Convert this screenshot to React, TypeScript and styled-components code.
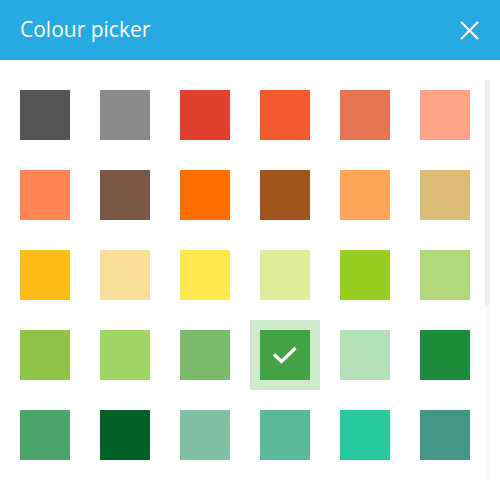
import React, { useState } from "react";
import styled, { createGlobalStyle } from "styled-components";

const Global = createGlobalStyle`
  html, body { margin: 0; padding: 0; background: #ffffff; }
  body { font-family: "Open Sans", "Noto Sans", sans-serif; }
  * { box-sizing: border-box; }
`;

const Dialog = styled.div`
  width: 500px;
  height: 500px;
  display: flex;
  flex-direction: column;
  background: #ffffff;
`;

const Header = styled.header`
  height: 60px;
  flex: none;
  background: #27a9e1;
  display: flex;
  align-items: center;
  justify-content: space-between;
  padding: 0 20px;
`;

const Title = styled.h1`
  margin: 0;
  font-family: "Open Sans", "Noto Sans", sans-serif;
  font-weight: 400;
  font-size: 21px;
  color: #ffffff;
  line-height: 1;
  margin-top: -1px;
`;

const CloseButton = styled.button`
  border: 0;
  background: transparent;
  padding: 0;
  width: 20px;
  height: 20px;
  display: flex;
  align-items: center;
  justify-content: center;
  cursor: pointer;
  margin-right: 1px;
`;

const Body = styled.div`
  display: flex;
  margin-top: 20px;
  padding-right: 10px;
  height: 400px;
`;

const Scroller = styled.div`
  flex: 1;
  height: 400px;
  overflow: hidden;
`;

const ScrollTrack = styled.div`
  width: 5px;
  height: 400px;
  background: #fafafa;
  display: flex;
  flex-direction: column;
`;

const ScrollThumb = styled.div`
  width: 5px;
  height: 225px;
  background: #eeeeee;
`;

const Grid = styled.div`
  display: grid;
  grid-template-columns: repeat(6, 50px);
  column-gap: 30px;
  row-gap: 30px;
  padding: 10px 0 11px 20px;
`;

const Swatch = styled.button<{ $color: string; $selected?: boolean }>`
  width: 50px;
  height: 50px;
  border: 0;
  padding: 0;
  background: ${(p) => p.$color};
  box-shadow: ${(p) => (p.$selected ? "0 0 0 10px #cfe9cf" : "none")};
  display: flex;
  align-items: center;
  justify-content: center;
  cursor: pointer;
`;

const colours = [
  "#555555", "#8a8a8a", "#e0402d", "#f05a2d", "#e57552", "#ffa386",
  "#ff8556", "#7b5745", "#ff6f00", "#9e541b", "#ffa658", "#dcbb77",
  "#fbbc17", "#f9df9a", "#ffe94c", "#e0ed9a", "#98cd22", "#b2d67a",
  "#8fc34a", "#a0d663", "#7bba6d", "#43a244", "#b4e0b9", "#1c8b3c",
  "#4ba46a", "#036128", "#82c0a6", "#5cba9a", "#29c9a0", "#449686",
  "#2ab5c4", "#1b8fa3", "#7fd3e6", "#27a9e1", "#1e6fbf", "#9ec3ea",
  "#3f51b5", "#6e7fd0", "#1d2d6b", "#7e57c2", "#b39ddb", "#5b2c8e",
  "#c36bd1", "#8e24aa", "#e91e63", "#f48fb1", "#ad1457", "#ff5c8a",
  "#3e3e3e", "#bdbdbd", "#d7ccc8", "#a1887f", "#90a4ae", "#546e7a",
];

export default function App() {
  const [selected, setSelected] = useState(21);
  return (
    <>
      <Global />
      <Dialog>
        <Header>
          <Title>Colour picker</Title>
          <CloseButton aria-label="Close">
            <svg width="19" height="19" viewBox="0 0 19 19">
              <path d="M1 1 L18 18 M18 1 L1 18" stroke="#ffffff" strokeWidth="2" fill="none" />
            </svg>
          </CloseButton>
        </Header>
        <Body>
          <Scroller>
            <Grid>
              {colours.map((c, i) => (
                <Swatch key={i} $color={c} $selected={i === selected} onClick={() => setSelected(i)}>
                  {i === selected && (
                    <svg width="26" height="20" viewBox="0 0 26 20">
                      <path d="M2 9.5 L9.5 16.5 L23.5 3" stroke="#ffffff" strokeWidth="3.2" fill="none" />
                    </svg>
                  )}
                </Swatch>
              ))}
            </Grid>
          </Scroller>
          <ScrollTrack>
            <ScrollThumb />
          </ScrollTrack>
        </Body>
      </Dialog>
    </>
  );
}
